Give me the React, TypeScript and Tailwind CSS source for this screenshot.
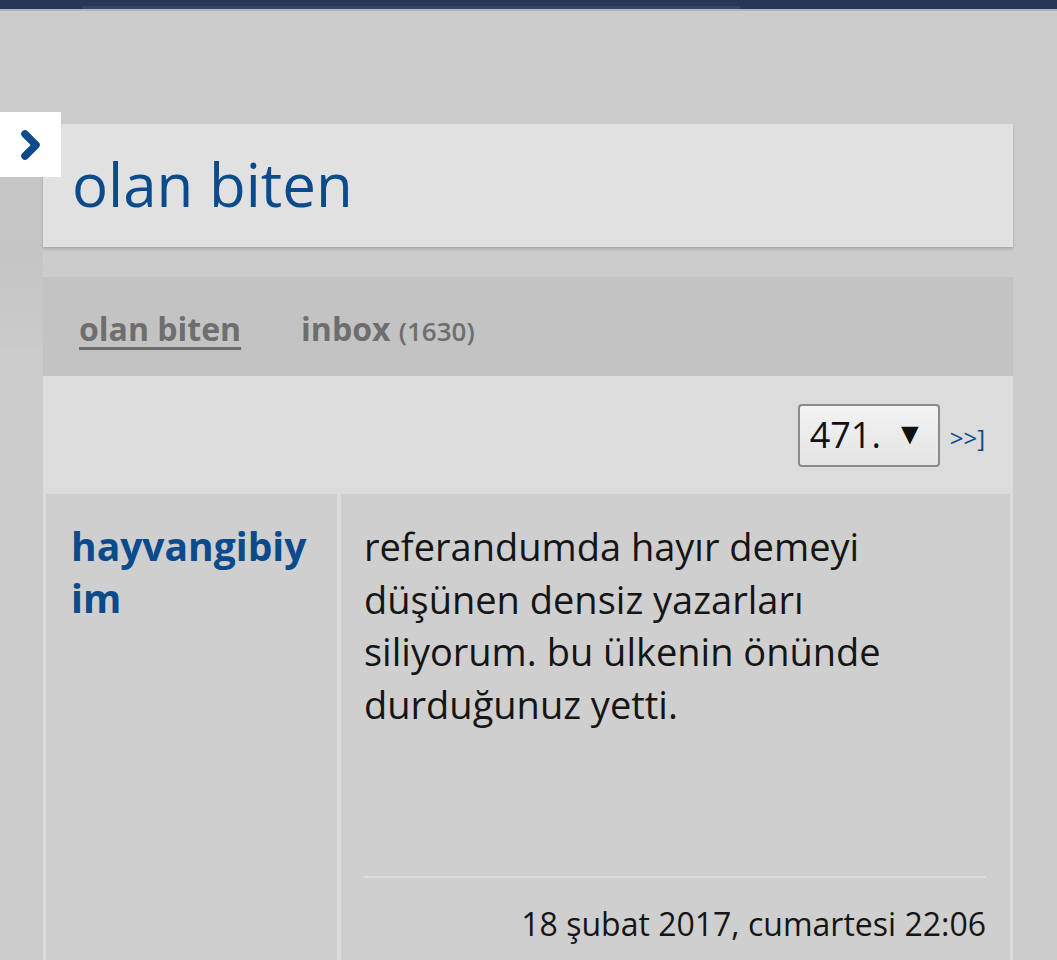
import React from "react";

function Chevron() {
  return (
    <svg width="24" height="34" viewBox="0 0 24 34" fill="none">
      <path d="M6 6 L17 17 L6 28" stroke="#0b4a8b" strokeWidth="7.5" strokeLinecap="round" strokeLinejoin="round" />
    </svg>
  );
}

export default function App() {
  return (
    <div className="min-h-screen bg-[#cccccc] font-['Open_Sans',sans-serif] overflow-hidden">
      {/* top bar */}
      <div className="h-[9px] bg-[#293756] flex items-end">
        <div className="ml-[82px] w-[658px] h-[3px] bg-[#364566]" />
      </div>
      <div className="h-[2px] bg-[#aeb6c6]" />

      <div className="flex relative">
        <button className="absolute left-0 top-[101px] w-[61px] h-[65px] bg-white flex items-center justify-center z-10">
          <Chevron />
        </button>

        {/* left gutter */}
        <div className="w-[43px] shrink-0">
          <div className="mt-[166px] h-[170px] bg-gradient-to-b from-[#c6c6c6] via-[#c5c5c5] to-[#cacaca]" />
        </div>

        <div className="w-[970px] shrink-0 pt-[113px]">
          {/* header card */}
          <div className="h-[123px] bg-[#e1e1e1] shadow-[0_2px_3px_rgba(0,0,0,0.18)] flex items-center pl-[29px]">
            <h1 className="text-[60px] leading-none text-[#0b4a8b] -mt-[3px]">olan biten</h1>
          </div>

          {/* tabs */}
          <div className="mt-[30px] h-[99px] bg-[#c3c3c3] flex items-center pl-[36px] pt-[5px] gap-[60px] text-[#6e6e6e] font-bold">
            <a className="text-[32px] underline decoration-[3px] underline-offset-[6px]">olan biten</a>
            <span className="text-[32px]">
              inbox <span className="text-[26px] font-semibold">(1630)</span>
            </span>
          </div>

          {/* content */}
          <div className="bg-[#dcdcdc] min-h-[600px]">
            <div className="h-[118px] flex items-center justify-end pr-[28px] gap-[10px]">
              <div className="w-[142px] h-[63px] border-2 border-[#8a8a8a] rounded-[4px] bg-gradient-to-b from-[#f3f3f3] to-[#e4e4e4] flex items-center pl-[10px] gap-[14px]">
                <span className="text-[36px] text-[#111]">471.</span>
                <span className="text-[30px] leading-none text-[#111] -mt-[4px]">▼</span>
              </div>
              <a className="text-[24px] text-[#0b4a8b] mt-[6px]">&gt;&gt;]</a>
            </div>

            <div className="flex gap-[4px] px-[3px]">
              <div className="w-[291px] shrink-0 bg-[#cfcfcf] pl-[25px] pr-[20px] pt-[26px] min-h-[470px]">
                <a className="block text-[39px] font-bold text-[#0b4a8b] leading-[52px]">
                  hayvangibiy
                  <br />
                  im
                </a>
              </div>
              <div className="flex-1 bg-[#cfcfcf] pl-[23px] pr-[24px] pt-[26px]">
                <p className="text-[38px] leading-[52.5px] text-[#151515] pr-[60px]">
                  referandumda hayır demeyi düşünen densiz yazarları siliyorum. bu ülkenin önünde durduğunuz yetti.
                </p>
                <div className="mt-[146px] h-[2px] bg-[#dedede]" />
                <div className="mt-[24px] text-right text-[32px] leading-[44px] text-[#151515]">
                  18 şubat 2017, cumartesi 22:06
                </div>
              </div>
            </div>
          </div>
        </div>

        {/* right gutter */}
        <div className="flex-1" />
      </div>
    </div>
  );
}
